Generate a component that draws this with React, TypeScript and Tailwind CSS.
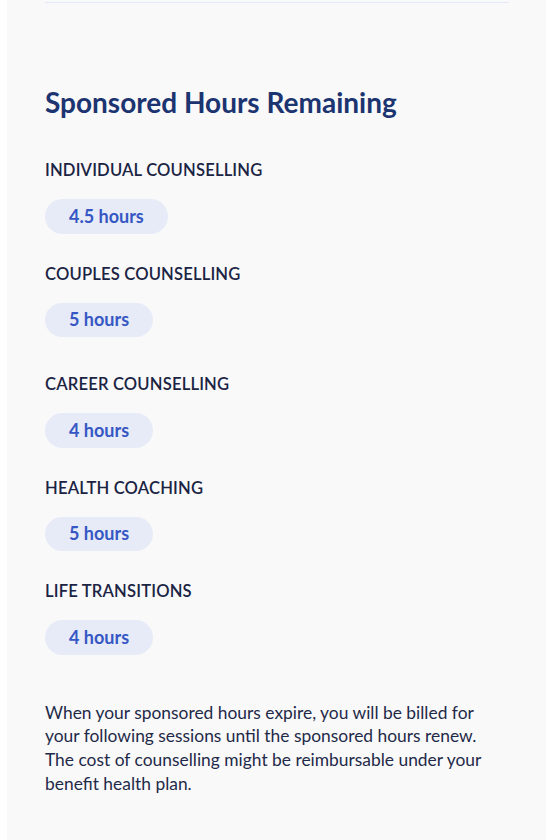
const items = [
  { label: "INDIVIDUAL COUNSELLING", hours: "4.5 hours", gap: "mt-0" },
  { label: "COUPLES COUNSELLING", hours: "5 hours", gap: "mt-[28px]" },
  { label: "CAREER COUNSELLING", hours: "4 hours", gap: "mt-[35px]" },
  { label: "HEALTH COACHING", hours: "5 hours", gap: "mt-[28px]" },
  { label: "LIFE TRANSITIONS", hours: "4 hours", gap: "mt-[28px]" },
];

export default function App() {
  return (
    <div className="min-h-[840px] bg-white pl-[7px] font-['Lato',sans-serif]">
      <div className="min-h-[840px] bg-[#f9f9fa] pl-[38px] pr-[37px] pt-[2px]">
        <div className="border-t border-[#e3e9f8]" />
        <h2 className="mt-[82px] text-[28px] font-bold leading-[34px] text-[#1c3470]">
          Sponsored Hours Remaining
        </h2>
        <div className="mt-[39px] flex flex-col">
          {items.map((item) => (
            <div key={item.label} className={`flex flex-col items-start ${item.gap}`}>
              <p className="text-[16.6px] font-semibold leading-[24px] tracking-[0.01em] text-[#1b2443]">
                {item.label}
              </p>
              <span className="mt-[17px] flex h-[34.5px] items-center rounded-full bg-[#e6ebf7] px-[24px] text-[18px] font-bold text-[#3657c4]">
                {item.hours}
              </span>
            </div>
          ))}
        </div>
        <p className="mt-[46px] text-[17.4px] leading-[23.7px] text-[#1f2a48]">
          When your sponsored hours expire, you will be billed for your following sessions until
          the sponsored hours renew. The cost of counselling might be reimbursable under your
          benefit health plan.
        </p>
      </div>
    </div>
  );
}
